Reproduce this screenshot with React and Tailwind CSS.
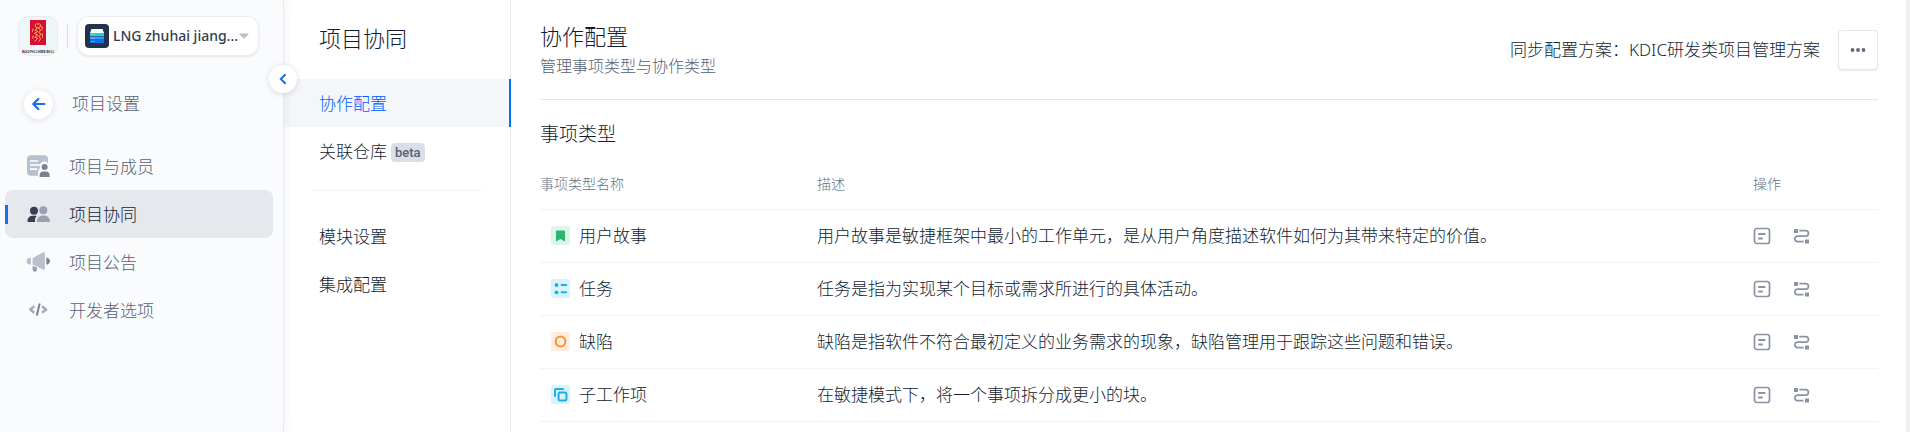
import React from "react";

function KongsbergLogo() {
  return (
    <svg viewBox="0 0 40 40" className="h-10 w-10 shrink-0" role="img" aria-label="Kongsberg">
      <rect x="0.5" y="0.5" width="39" height="39" rx="10" fill="#eef6f7" stroke="#e4ecee" />
      <rect x="12" y="4" width="16" height="25" fill="#d8102f" />
      <g fill="none" stroke="#eeb660" strokeWidth="1" strokeLinecap="round">
        <path d="M17.5 8.500l1.200-1 1.300 1 1.300-1 1 1v2.200l-2.400 1.400-2.200-1.200z" />
        <path d="M19 12l-1.800 2.200 2.600 1.200-3.400 2 3.400 1.600-3 2.200 2.800 1-2.600 3" />
        <path d="M21 12.400l1.600 2-1.800 2 2.400 1.800-2.400 2 1.800 2.600-1.800 2.600" />
        <path d="M23.600 10.500l1 2-1 1.400M15 13l-.4 2.400M24.400 18v3.400M15.200 20l-.4 2.400" />
      </g>
      <text x="20" y="37" textAnchor="middle" fontSize="5" fontWeight="700" fontFamily="'Liberation Serif', serif" fill="#1b2b4a">
        KONGSBERG
      </text>
    </svg>
  );
}

function ProjectIcon() {
  return (
    <svg viewBox="0 0 24 24" className="h-6 w-6 shrink-0" aria-hidden="true">
      <rect width="24" height="24" rx="4" fill="#22344c" />
      <path d="M6.500 5h11l1.500 4H5z" fill="#fff" />
      <rect x="5" y="9" width="14" height="3" fill="#10d5ee" />
      <rect x="5" y="12.500" width="14" height="3" fill="#3a97f7" />
      <rect x="5" y="16" width="14" height="3" rx="0.600" fill="#0b74f0" />
      <g fill="#ffd34d">
        <circle cx="6.800" cy="10.500" r="0.600" />
        <circle cx="8.900" cy="10.500" r="0.600" />
        <circle cx="6.800" cy="14" r="0.600" />
        <circle cx="8.900" cy="14" r="0.600" />
        <circle cx="6.800" cy="17.500" r="0.600" />
        <circle cx="8.900" cy="17.500" r="0.600" />
      </g>
    </svg>
  );
}

function MembersIcon() {
  return (
    <svg viewBox="0 0 24 24" className="h-6 w-6 shrink-0" aria-hidden="true">
      <path d="M5 1.200h13a4 4 0 0 1 4 4v4.200a4.400 4.400 0 0 0-7.600 4.600c-1.600 1-2.400 2.600-2.400 4.600v3.200H5a4 4 0 0 1-4-4V5.200a4 4 0 0 1 4-4z" fill="#b9c0cd" />
      <path d="M4.600 7h7M4.600 11h9M4.600 15.200h6" stroke="#fff" strokeWidth="1.700" strokeLinecap="round" />
      <circle cx="18.600" cy="13" r="3" fill="#79818f" />
      <path d="M13.600 23v-1.400a4 4 0 0 1 4-4h2a4 4 0 0 1 4 4V23z" fill="#79818f" />
    </svg>
  );
}

function TeamIcon() {
  return (
    <svg viewBox="0 0 24 24" className="h-6 w-6 shrink-0" aria-hidden="true">
      <circle cx="8" cy="8.800" r="4" fill="#363f52" />
      <path d="M1.500 20v-1.200a5 5 0 0 1 5-5h4.200a7.600 7.600 0 0 0-1.600 6.200z" fill="#363f52" />
      <circle cx="17.300" cy="8.200" r="4" fill="#98a1b2" />
      <path d="M10.800 20v-.8a5.600 5.600 0 0 1 5.600-5.600h2a5.600 5.600 0 0 1 5.600 5.600v.8z" fill="#98a1b2" />
    </svg>
  );
}

function MegaphoneIcon() {
  return (
    <svg viewBox="0 0 24 24" className="h-6 w-6 shrink-0" aria-hidden="true">
      <path d="M5 8v6.400H3.800a3.200 3.200 0 0 1 0-6.400z" fill="#b9c0cd" />
      <path d="M6.600 8L17 2.400c1-.5 1.900 0 1.900 1V18.400c0 1-.9 1.600-1.900 1L6.600 14.600z" fill="#b9c0cd" />
      <path d="M6.600 15.800l4.400 1.800v2a2.200 2.200 0 0 1-4.400 0z" fill="#98a1b2" />
      <path d="M20.300 7.400c2.200.3 3.700 1.900 3.700 3.700s-1.500 3.400-3.700 3.700z" fill="#79818f" />
    </svg>
  );
}

function CodeIcon() {
  return (
    <svg viewBox="0 0 24 24" className="h-6 w-6 shrink-0" fill="none" strokeWidth="2.400" aria-hidden="true">
      <path d="M8.300 8.200L4.200 11.500l4.100 3.300M16 8.200l4.100 3.300-4.100 3.300" stroke="#a3abb9" strokeLinejoin="round" />
      <path d="M13.700 5.600L10.800 17.400" stroke="#79818f" strokeWidth="2" />
    </svg>
  );
}

function StoryIcon() {
  return (
    <svg viewBox="0 0 19 19" className="h-[19px] w-[19px] shrink-0" aria-hidden="true">
      <rect width="19" height="19" rx="2" fill="#def5e9" />
      <path d="M6 4.500h7a1 1 0 0 1 1 1v10L9.500 13 5 15.500v-10a1 1 0 0 1 1-1z" fill="#2fb572" />
    </svg>
  );
}

function TaskIcon() {
  return (
    <svg viewBox="0 0 19 19" className="h-[19px] w-[19px] shrink-0" aria-hidden="true">
      <rect width="19" height="19" rx="2" fill="#d9f3fc" />
      <circle cx="5.500" cy="6" r="1.900" fill="#1db0e6" />
      <circle cx="5.500" cy="13.300" r="1.900" fill="#1db0e6" />
      <path d="M10.600 6h4.600M10.600 13.300h4.600" stroke="#1db0e6" strokeWidth="2" strokeLinecap="round" />
    </svg>
  );
}

function BugIcon() {
  return (
    <svg viewBox="0 0 19 19" className="h-[19px] w-[19px] shrink-0" aria-hidden="true">
      <rect width="19" height="19" rx="2" fill="#ffeee0" />
      <circle cx="9.500" cy="9.500" r="4.900" fill="none" stroke="#ff8f2e" strokeWidth="2" />
    </svg>
  );
}

function SubtaskIcon() {
  return (
    <svg viewBox="0 0 19 19" className="h-[19px] w-[19px] shrink-0" fill="none" stroke="#1db0e6" strokeWidth="2" aria-hidden="true">
      <rect width="19" height="19" rx="2" fill="#d9f3fc" stroke="none" />
      <path d="M4 11.800V5a1 1 0 0 1 1-1h7.800" />
      <rect x="7.600" y="7.600" width="7.800" height="7.800" rx="1.200" />
    </svg>
  );
}

function FormIcon() {
  return (
    <svg viewBox="0 0 18 18" className="h-[18px] w-[18px]" fill="none" stroke="#8b93a3" aria-hidden="true">
      <rect x="1.500" y="1.500" width="15" height="15" rx="2.500" strokeWidth="1.700" />
      <path d="M5.200 7h7.200M5.200 11.400h4.600" strokeWidth="2" />
    </svg>
  );
}

function FlowIcon() {
  return (
    <svg viewBox="0 0 18 18" className="h-[18px] w-[18px]" aria-hidden="true">
      <path d="M1 2h4v4H1zM12 12.500h4v4h-4z" fill="#8b93a3" />
      <path d="M6.300 3.600h6.400a2.750 2.750 0 0 1 0 5.500H4.600a2.750 2.750 0 0 0 0 5.500h6" fill="none" stroke="#8b93a3" strokeWidth="1.700" />
    </svg>
  );
}

const navItems = [
  { label: "项目与成员", Icon: MembersIcon },
  { label: "项目协同", Icon: TeamIcon, active: true },
  { label: "项目公告", Icon: MegaphoneIcon },
  { label: "开发者选项", Icon: CodeIcon },
];

const issueTypes = [
  { name: "用户故事", Icon: StoryIcon, text: "用户故事是敏捷框架中最小的工作单元，是从用户角度描述软件如何为其带来特定的价值。" },
  { name: "任务", Icon: TaskIcon, text: "任务是指为实现某个目标或需求所进行的具体活动。" },
  { name: "缺陷", Icon: BugIcon, text: "缺陷是指软件不符合最初定义的业务需求的现象，缺陷管理用于跟踪这些问题和错误。" },
  { name: "子工作项", Icon: SubtaskIcon, text: "在敏捷模式下，将一个事项拆分成更小的块。" },
];

function Sidebar() {
  return (
    <aside className="relative z-10 w-[284px] shrink-0 border-r border-[#e8eaee] bg-[#fafbfd] shadow-[2px_0_8px_rgba(30,50,90,0.06)]">
      <div className="flex items-center pt-4 pr-6 pl-[18px]">
        <KongsbergLogo />
        <span className="mx-[9px] h-6 w-px bg-[#dde0e6]" />
        <label className="flex h-10 min-w-0 flex-1 items-center rounded-xl border border-[#eceef1] bg-white pr-[9px] pl-[7px] shadow-[0_1px_2px_rgba(30,50,90,0.12)]">
          <ProjectIcon />
          <select aria-label="当前项目" className="ml-1 min-w-0 flex-1 appearance-none bg-transparent text-sm font-medium text-[#323c50] outline-none">
            <option>LNG zhuhai jiang...</option>
          </select>
          <svg viewBox="0 0 10 6" className="pointer-events-none h-[6px] w-[10px] shrink-0" aria-hidden="true">
            <path d="M1 .5h8c.5 0 .8.500.4.900L5.600 5.300a.8.8 0 0 1-1.200 0L.6 1.400C.2 1 .5.500 1 .500z" fill="#b9c0cd" />
          </svg>
        </label>
      </div>

      <a href="#settings" className="mt-8 ml-6 flex h-8 items-center text-[17px] text-[#566176]">
        <span className="flex h-[29px] w-[29px] items-center justify-center rounded-full bg-white shadow-[0_1px_6px_rgba(30,50,90,0.14)]">
          <svg viewBox="0 0 14 14" className="h-[14px] w-[14px]" fill="none" stroke="#1a6df0" strokeWidth="2.200" strokeLinecap="round" strokeLinejoin="round" aria-hidden="true">
            <path d="M12.500 7H1.500M6.300 2L1.300 7l5 5" />
          </svg>
        </span>
        <span className="ml-[19px]">项目设置</span>
      </a>

      <nav className="mt-[22px] mr-[10px] ml-[5px]">
        {navItems.map(({ label, Icon, active }) => (
          <a
            key={label}
            href="#nav"
            aria-current={active ? "page" : undefined}
            className={
              active
                ? "flex h-12 items-center rounded-lg bg-[#e5e8ed] text-[17px] text-[#111c30]"
                : "flex h-12 items-center text-[17px] text-[#566176]"
            }
          >
            <span className={active ? "h-[19px] w-[3px] bg-[#1a6df0]" : "h-[19px] w-[3px]"} />
            <span className="mr-[19px] ml-[18px]">
              <Icon />
            </span>
            <span className="pt-0.5">{label}</span>
          </a>
        ))}
      </nav>

      <button
        type="button"
        aria-label="收起侧边栏"
        className="absolute top-[65px] -right-[14px] flex h-7 w-7 items-center justify-center rounded-full bg-white shadow-[0_1px_6px_rgba(30,50,90,0.16)]"
      >
        <svg viewBox="0 0 12 12" className="h-3 w-3" fill="none" stroke="#1a6df0" strokeWidth="2" aria-hidden="true">
          <path d="M8.600 1.200L3.800 6l4.800 4.800" />
        </svg>
      </button>
    </aside>
  );
}

function SubNav() {
  return (
    <nav className="w-[227px] shrink-0 border-r border-[#e8e9ec] pt-[22px] text-[17px] text-[#111c30]">
      <h2 className="mb-[25px] pl-[35px] text-[22px] leading-8">项目协同</h2>
      <a href="#config" aria-current="page" className="-mr-px flex h-12 items-center border-r-2 border-[#0a6cff] bg-[#f5f6fa] pt-0.5 pl-[35px] text-[#005eff]">
        协作配置
      </a>
      <a href="#repos" className="flex h-12 items-center pt-0.5 pl-[35px]">
        关联仓库
        <span className="ml-1 rounded bg-[#dadee6] px-1 font-['Roboto',sans-serif] text-[13px] leading-[19px] font-medium text-[#55607a]">beta</span>
      </a>
      <hr className="mt-[15px] mr-7 mb-[22px] ml-7 border-[#f1f2f4]" />
      <a href="#modules" className="flex h-12 items-center pl-[35px]">模块设置</a>
      <a href="#integrations" className="flex h-12 items-center pl-[35px]">集成配置</a>
    </nav>
  );
}

function Main() {
  return (
    <main className="min-w-0 flex-1 pr-7 pl-[29px] text-[#111c30]">
      <header className="flex h-[100px] items-center justify-between border-b border-[#e7e8eb] pt-px">
        <div>
          <h1 className="text-[22px] leading-8">协作配置</h1>
          <p className="text-base leading-7 text-[#566176]">管理事项类型与协作类型</p>
        </div>
        <div className="flex items-center gap-[18px]">
          <span className="text-[17px]">同步配置方案：KDIC研发类项目管理方案</span>
          <button type="button" aria-label="更多" className="flex h-10 w-10 items-center justify-center rounded border border-[#e6e7ea] bg-white shadow-[0_1px_2px_rgba(30,50,90,0.1)]">
            <svg viewBox="0 0 16 4" className="h-1 w-4" fill="#5f6b7c" aria-hidden="true">
              <circle cx="2.500" cy="2" r="1.900" />
              <circle cx="8" cy="2" r="1.900" />
              <circle cx="13.500" cy="2" r="1.900" />
            </svg>
          </button>
        </div>
      </header>

      <h2 className="mt-5 text-[19px] leading-7">事项类型</h2>

      <table className="mt-[11px] w-full table-fixed border-collapse text-left">
        <thead>
          <tr className="h-[50px] border-b border-[#f1f2f4] text-sm text-[#697384]">
            <th className="w-[277px] p-0 font-light">事项类型名称</th>
            <th className="p-0 font-light">描述</th>
            <th className="w-[125px] p-0 font-light">操作</th>
          </tr>
        </thead>
        <tbody>
          {issueTypes.map(({ name, Icon, text }) => (
            <tr key={name} className="h-[53px] border-b border-[#f1f2f4] text-[17px]">
              <td className="p-0 pl-[11px]">
                <div className="flex items-center gap-[9px]">
                  <Icon />
                  {name}
                </div>
              </td>
              <td className="p-0">{text}</td>
              <td className="p-0">
                <div className="flex items-center gap-[22px]">
                  <button type="button" aria-label={"编辑" + name + "字段"}>
                    <FormIcon />
                  </button>
                  <button type="button" aria-label={"编辑" + name + "流程"}>
                    <FlowIcon />
                  </button>
                </div>
              </td>
            </tr>
          ))}
        </tbody>
      </table>
    </main>
  );
}

export default function App() {
  return (
    <div className="flex min-h-screen bg-white font-['Noto_Sans','Noto_Sans_CJK_SC',sans-serif] font-light">
      <Sidebar />
      <SubNav />
      <Main />
      <div className="w-1 shrink-0 bg-[#f0f0f0]" />
    </div>
  );
}
